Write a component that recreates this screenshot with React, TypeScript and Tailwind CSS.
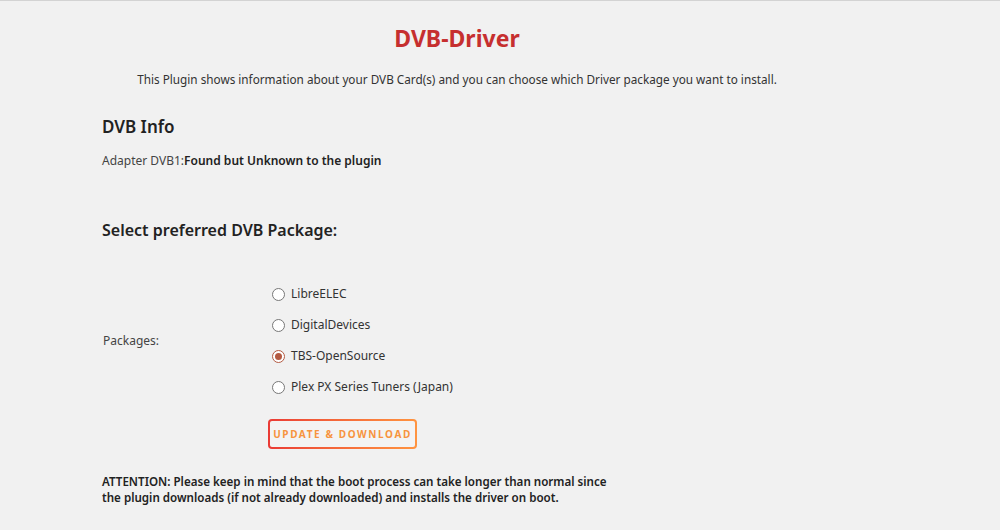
import React, { useState } from "react";

const packages = ["LibreELEC", "DigitalDevices", "TBS-OpenSource", "Plex PX Series Tuners (Japan)"];

export default function App() {
  const [sel, setSel] = useState("TBS-OpenSource");
  return (
    <div
      className="w-[1000px] h-[530px] bg-[#f1f1f1] border-t border-[#d3d3d3] text-[#333] overflow-hidden"
      style={{ fontFamily: '"Noto Sans", "Open Sans", sans-serif' }}
    >
      <div className="ml-[102px] w-[710px] flex flex-col">
        <h1 className="text-center text-[23px] font-bold text-[#c62f2f] leading-[30px] mt-[22px]">DVB-Driver</h1>
        <p className="text-center text-[11.75px] leading-[16px] mt-[18px] text-[#333]">
          This Plugin shows information about your DVB Card(s) and you can choose which Driver package you want to install.
        </p>
        <h2 className="text-[17px] font-semibold leading-[22px] mt-[29px] text-[#222]">DVB Info</h2>
        <p className="text-[12px] leading-[16px] mt-[15px] text-[#444]">
          Adapter DVB1:<span className="font-semibold text-[#222]">Found but Unknown to the plugin</span>
        </p>
        <h2 className="text-[16px] font-semibold leading-[22px] mt-[50px] text-[#222]">Select preferred DVB Package:</h2>
        <div className="flex items-center mt-[44px]">
          <div className="w-[170px] text-[12px] pl-[1px] text-[#444]">Packages:</div>
          <div className="flex flex-col gap-[13px]">
            {packages.map((p) => (
              <label key={p} className="flex items-center h-[18px] text-[12px] text-[#333] cursor-pointer">
                <span
                  className={
                    "w-[13px] h-[13px] rounded-full border flex items-center justify-center bg-white " +
                    (sel === p ? "border-[#b45a42]" : "border-[#777]")
                  }
                  onClick={() => setSel(p)}
                >
                  {sel === p && <span className="w-[7px] h-[7px] rounded-full bg-[#b45a42]" />}
                </span>
                <span className="ml-[6px]">{p}</span>
              </label>
            ))}
          </div>
        </div>
        <div className="ml-[166px] mt-[23px] flex">
          <div className="p-[2px] rounded-[4px] bg-gradient-to-r from-[#ea3a35] to-[#ff9440]">
            <button className="h-[26px] w-[145px] flex items-center justify-center whitespace-nowrap rounded-[2px] bg-[#f3f3f3] text-[10px] font-bold tracking-[1.6px] text-[#f7943e]">
              UPDATE &amp; DOWNLOAD
            </button>
          </div>
        </div>
        <p className="text-[11.6px] leading-[16px] font-semibold mt-[25px] text-[#222] w-[512px]">
          ATTENTION: Please keep in mind that the boot process can take longer than normal since the plugin downloads (if not already downloaded) and installs the driver on boot.
        </p>
      </div>
    </div>
  );
}
